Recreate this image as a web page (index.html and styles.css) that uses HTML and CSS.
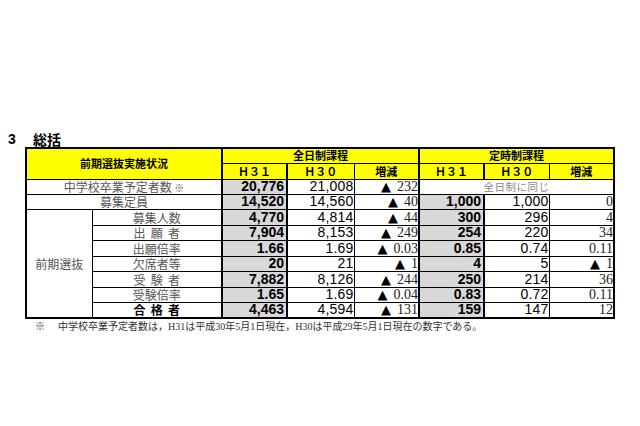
FILE: index.html
```html
<!DOCTYPE html>
<html lang="ja">
<head>
<meta charset="utf-8">
<link rel="stylesheet" href="styles.css">
</head>
<body>
<div class="page">
  <h2 class="title"><span class="num">3</span><span>総括</span></h2>
  <table class="summary">
    <colgroup>
      <col class="c-a"><col class="c-b"><col class="c-n"><col class="c-d"><col class="c-n"><col class="c-n"><col class="c-n"><col class="c-n">
    </colgroup>
    <thead>
      <tr class="h15">
        <th colspan="2" rowspan="2" class="hd">前期選抜実施状況</th>
        <th colspan="3" class="hd grp">全日制課程</th>
        <th colspan="3" class="hd grp">定時制課程</th>
      </tr>
      <tr class="h16">
        <th class="hd cur">Ｈ３１</th><th class="hd">Ｈ３０</th><th class="hd">増減</th>
        <th class="hd cur">Ｈ３１</th><th class="hd">Ｈ３０</th><th class="hd">増減</th>
      </tr>
    </thead>
    <tbody>
      <tr class="h15">
        <td colspan="2" class="lbl">中学校卒業予定者数 <span class="kome">※</span></td>
        <td class="cur">20,776</td><td class="prev">21,008</td><td class="diff"><span class="tri">▲</span>232</td>
        <td colspan="3" class="same grp">全日制に同じ</td>
      </tr>
      <tr class="h15">
        <td colspan="2" class="lbl">募集定員</td>
        <td class="cur">14,520</td><td class="prev">14,560</td><td class="diff"><span class="tri">▲</span>40</td>
        <td class="cur">1,000</td><td class="prev">1,000</td><td class="diff">0</td>
      </tr>
      <tr class="h16">
        <td rowspan="7" class="lbl">前期選抜</td>
        <td class="lbl">募集人数</td>
        <td class="cur">4,770</td><td class="prev">4,814</td><td class="diff"><span class="tri">▲</span>44</td>
        <td class="cur">300</td><td class="prev">296</td><td class="diff">4</td>
      </tr>
      <tr class="h15">
        <td class="lbl spaced">出 願 者</td>
        <td class="cur">7,904</td><td class="prev">8,153</td><td class="diff"><span class="tri">▲</span>249</td>
        <td class="cur">254</td><td class="prev">220</td><td class="diff">34</td>
      </tr>
      <tr class="h16">
        <td class="lbl">出願倍率</td>
        <td class="cur">1.66</td><td class="prev">1.69</td><td class="diff"><span class="tri">▲</span>0.03</td>
        <td class="cur">0.85</td><td class="prev">0.74</td><td class="diff">0.11</td>
      </tr>
      <tr class="h15">
        <td class="lbl">欠席者等</td>
        <td class="cur">20</td><td class="prev">21</td><td class="diff"><span class="tri">▲</span>1</td>
        <td class="cur">4</td><td class="prev">5</td><td class="diff"><span class="tri">▲</span>1</td>
      </tr>
      <tr class="h16">
        <td class="lbl spaced">受 験 者</td>
        <td class="cur">7,882</td><td class="prev">8,126</td><td class="diff"><span class="tri">▲</span>244</td>
        <td class="cur">250</td><td class="prev">214</td><td class="diff">36</td>
      </tr>
      <tr class="h15">
        <td class="lbl">受験倍率</td>
        <td class="cur">1.65</td><td class="prev">1.69</td><td class="diff"><span class="tri">▲</span>0.04</td>
        <td class="cur">0.83</td><td class="prev">0.72</td><td class="diff">0.11</td>
      </tr>
      <tr class="h16">
        <td class="lbl spaced strong">合 格 者</td>
        <td class="cur">4,463</td><td class="prev">4,594</td><td class="diff"><span class="tri">▲</span>131</td>
        <td class="cur">159</td><td class="prev">147</td><td class="diff">12</td>
      </tr>
    </tbody>
  </table>
  <p class="note"><span class="mark">※</span>中学校卒業予定者数は，H31は平成30年5月1日現在，H30は平成29年5月1日現在の数字である。</p>
</div>
</body>
</html>
```

FILE: styles.css
```css
html, body {
  margin: 0;
  padding: 0;
  background: #ffffff;
}

.page {
  padding: 131px 0 0 8px;
  font-family: "Noto Sans CJK JP", sans-serif;
  color: #000;
}

.title {
  margin: 0;
  height: 16px;
  font-size: 14px;
  line-height: 16px;
  font-weight: 700;
  display: flex;
}

.title .num {
  width: 25px;
  font-family: "Liberation Sans", sans-serif;
  font-size: 14px;
}

.summary {
  margin-left: 17px;
  width: 588px;
  table-layout: fixed;
  border-collapse: collapse;
  border: 2px solid #000;
}

.c-a { width: 66px; }
.c-b { width: 130px; }
.c-n { width: 65px; }
.c-d { width: 67px; }

.summary th,
.summary td {
  border: 1px solid #000;
  padding: 0;
  white-space: nowrap;
  overflow: hidden;
  line-height: 13px;
}

.h15 { height: 15px; }
.h16 { height: 16px; }

.hd {
  background: #ffff00;
  font-size: 11px;
  font-weight: 700;
  text-align: center;
}

.grp { border-left: 2px solid #000 !important; }

.cur {
  border-left: 2px solid #000 !important;
  border-right: 2px solid #000 !important;
}

td.cur {
  background: #d8d8d8;
  font-family: "Liberation Sans", sans-serif;
  font-weight: 700;
  font-size: 14px;
  text-align: right;
  padding-right: 2px;
}

.prev {
  font-family: "Liberation Sans", sans-serif;
  font-size: 14px;
  letter-spacing: 0.2px;
  text-align: right;
  padding-right: 2px;
}

.diff {
  font-family: "Liberation Serif", serif;
  font-size: 14px;
  color: #222;
  text-align: right;
  padding-right: 2px;
}

.tri {
  font-family: "DejaVu Sans", sans-serif;
  font-size: 13px;
  color: #000;
  margin-right: 6px;
}

.lbl {
  font-size: 12px;
  font-weight: 400;
  color: #555;
  text-align: center;
}

.lbl.spaced { word-spacing: 2.5px; }

.kome { font-size: 10px; }

.lbl.strong {
  font-weight: 700;
  color: #000;
}

.same {
  font-size: 10.5px;
  font-weight: 400;
  color: #888;
  text-align: center;
  letter-spacing: 0.5px;
}

.note {
  margin: 2px 0 0 27px;
  font-family: "Liberation Serif", "Noto Sans CJK JP", serif;
  font-size: 10px;
  line-height: 12px;
  color: #333;
}

.note .mark { margin-right: 13px; }
```
